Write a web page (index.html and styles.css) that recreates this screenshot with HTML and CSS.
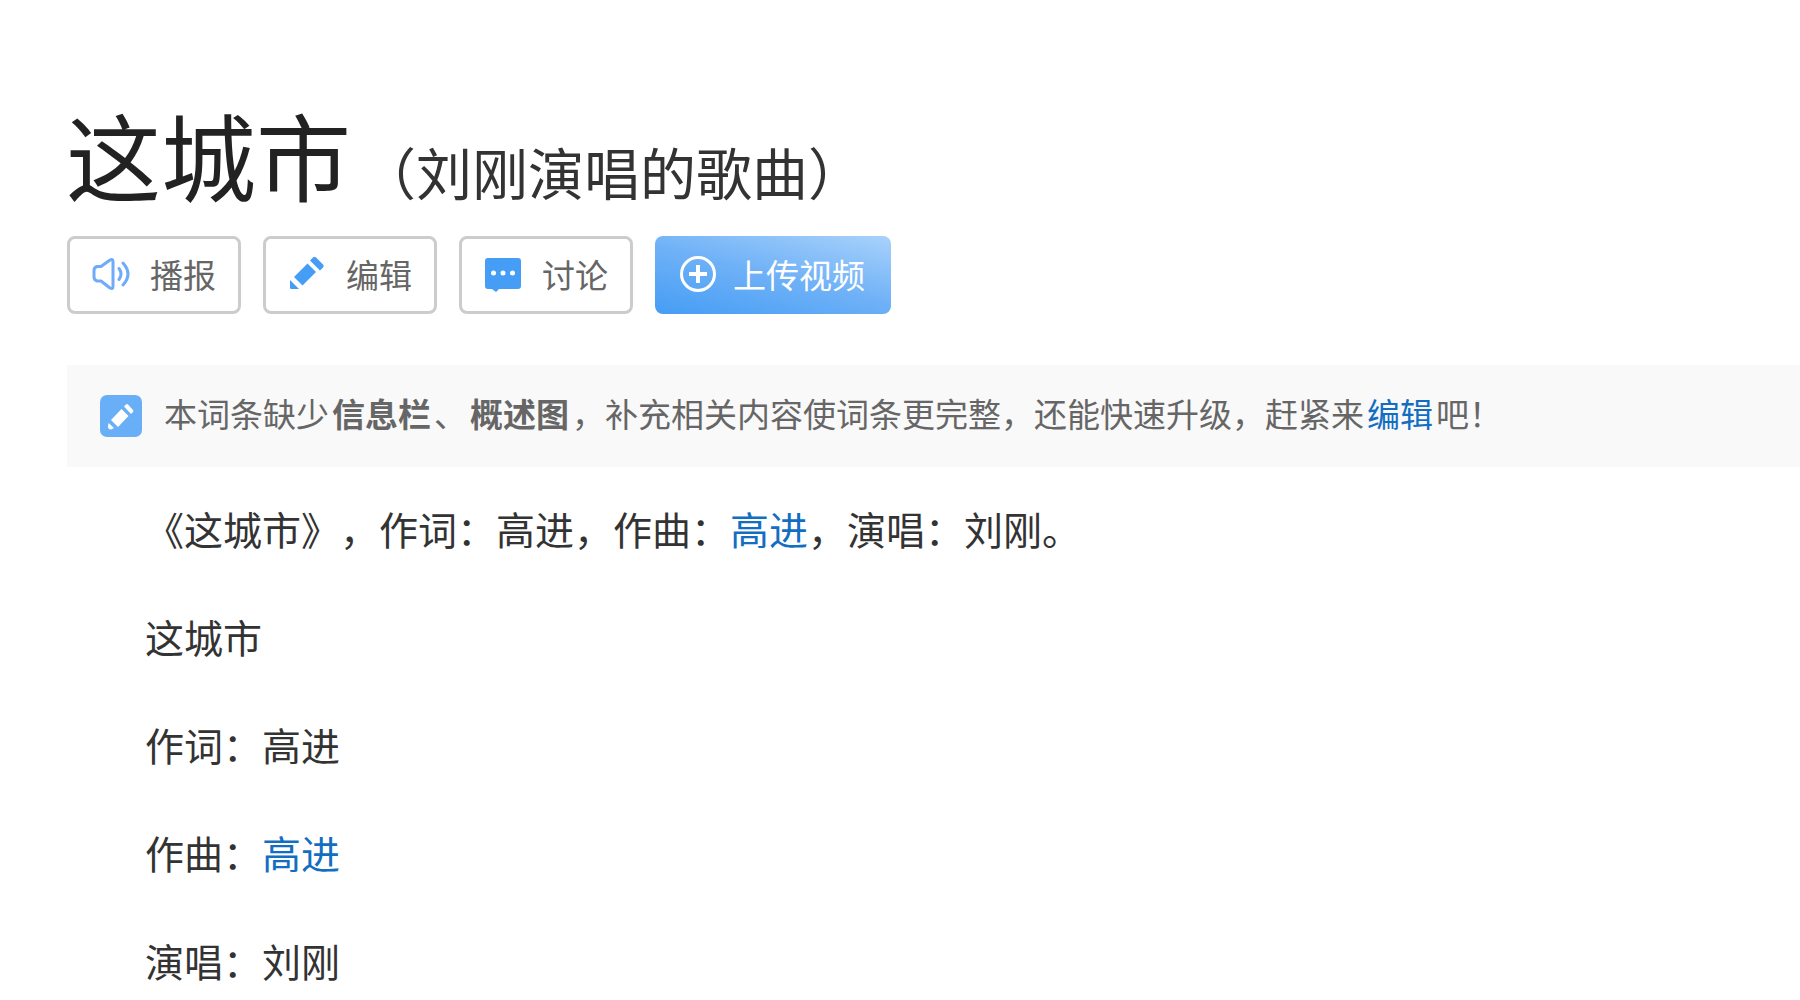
FILE: index.html
```html
<!DOCTYPE html>
<html lang="zh-CN">
<head>
<meta charset="utf-8">
<meta name="viewport" content="width=device-width, initial-scale=1">
<title>这城市（刘刚演唱的歌曲）</title>
<link rel="stylesheet" href="styles.css">
</head>
<body>
<main class="entry">
  <header class="entry-header">
    <h1 class="title">这城市</h1>
    <span class="subtitle">（刘刚演唱的歌曲）</span>
  </header>

  <div class="actions">
    <button type="button" class="btn">
      <svg class="icon" viewBox="0 0 38 38" fill="none" stroke="#6eacfb" stroke-width="3" stroke-linejoin="round" stroke-linecap="round" aria-hidden="true">
        <path d="M5 11.500h4L18 5q3-1.500 3 1.500v25q0 3-3 1.500L9 26H5q-3-1-3-4v-6.500q0-3 3-4z"/>
        <path d="M27 13.500q4 5.500 0 11"/>
        <path d="M31 8q10 11 0 22"/>
      </svg>
      播报
    </button>
    <button type="button" class="btn">
      <svg class="icon" viewBox="0 0 38 38" fill="#459df5" aria-hidden="true">
        <path d="M19.500 8.500l8.500 8.500L14.500 30.500 6 22z"/>
        <path d="M22 5.500l3-3q1.500-1.500 3 0l7 7q1.500 1.500 0 3l-3 3z"/>
        <path d="M2 25l9 9H3.500q-1.500 0-1.500-1.500z"/>
      </svg>
      编辑
    </button>
    <button type="button" class="btn">
      <svg class="icon" viewBox="0 0 38 38" aria-hidden="true">
        <path fill="#459df5" d="M4 3h30q3 0 3 3v25q0 3-3 3H15l-3 3-4-3H4q-3 0-3-3V6q0-3 3-3z"/>
        <g fill="#fff"><circle cx="9.500" cy="18" r="2.500"/><circle cx="19" cy="18" r="2.500"/><circle cx="28.500" cy="18" r="2.500"/></g>
      </svg>
      讨论
    </button>
    <button type="button" class="btn btn-primary">
      <svg class="icon" viewBox="0 0 38 38" fill="none" stroke="#fff" stroke-width="3" aria-hidden="true">
        <circle cx="19" cy="19" r="16.500"/>
        <path stroke-width="4" d="M19 10v18M10 19h18"/>
      </svg>
      上传视频
    </button>
  </div>

  <div class="notice">
    <svg class="notice-icon" viewBox="0 0 42 42" aria-hidden="true">
      <rect width="42" height="42" rx="7" fill="#69aff8"/>
      <g fill="#fff">
        <path d="M21.500 14l7 7L18 32l-7-7z"/>
        <path d="M24 11.500l2-2q1-1 2 0l5 5.500q1 1 0 2l-2 2z"/>
        <path d="M8.500 28l5.500 5-3 1.500q-3 0-3-3z"/>
      </g>
    </svg>
    <p class="notice-text">本词条缺少<strong>信息栏</strong>、<strong>概述图</strong>，补充相关内容使词条更完整，还能快速升级，赶紧来<a href="#edit">编辑</a>吧！</p>
  </div>

  <section class="content">
    <p>《这城市》，作词：高进，作曲：<a href="#gaojin">高进</a>，演唱：刘刚。</p>
    <p>这城市</p>
    <p>作词：高进</p>
    <p>作曲：<a href="#gaojin">高进</a></p>
    <p>演唱：刘刚</p>
  </section>
</main>
</body>
</html>
```
FILE: styles.css
```css
* {
  box-sizing: border-box;
}

body {
  margin: 0;
  background: #fff;
  color: #333;
  font-family: "Noto Sans CJK SC", sans-serif;
  text-spacing-trim: space-all;
}

a {
  color: #136ec2;
  text-decoration: none;
}

p {
  margin: 0;
}

.entry {
  padding: 98px 0 0 66px;
}

.entry-header {
  display: flex;
  align-items: baseline;
  gap: 9px;
  line-height: 112px;
}

.title {
  margin: 0;
  font-size: 95px;
  font-weight: 400;
  color: #222;
}

.subtitle {
  font-size: 56px;
}

.actions {
  display: flex;
  flex-wrap: wrap;
  gap: 22px;
  margin: 9px 0 0 1px;
}

.btn {
  display: flex;
  align-items: center;
  gap: 20px;
  height: 78px;
  padding: 0 22px 2px;
  border: 3px solid #ccc;
  border-radius: 8px;
  background: #fff;
  color: #666;
  font-family: inherit;
  font-size: 33px;
  line-height: 48px;
  cursor: pointer;
}

.btn-primary {
  gap: 16px;
  border: 0;
  padding: 0 26px 2px 24px;
  background: linear-gradient(14deg, #459df5 0%, #6fb1f7 50%, #a9d2fb 100%);
  color: #fff;
}

.icon {
  width: 38px;
  height: 38px;
  flex: none;
}

.notice {
  display: flex;
  align-items: center;
  gap: 22px;
  margin: 51px 0 0 1px;
  padding: 24px 33px;
  background: #f9f9f9;
  color: #666;
}

.notice-icon {
  width: 42px;
  height: 42px;
  flex: none;
}

.notice-text {
  padding-bottom: 6px;
  font-size: 33px;
  line-height: 48px;
}

.notice-text strong,
.notice-text a {
  margin: 0 3px;
}

.content {
  display: flex;
  flex-direction: column;
  gap: 48px;
  padding: 31px 79px 0;
  font-size: 39px;
  line-height: 60px;
}
```
